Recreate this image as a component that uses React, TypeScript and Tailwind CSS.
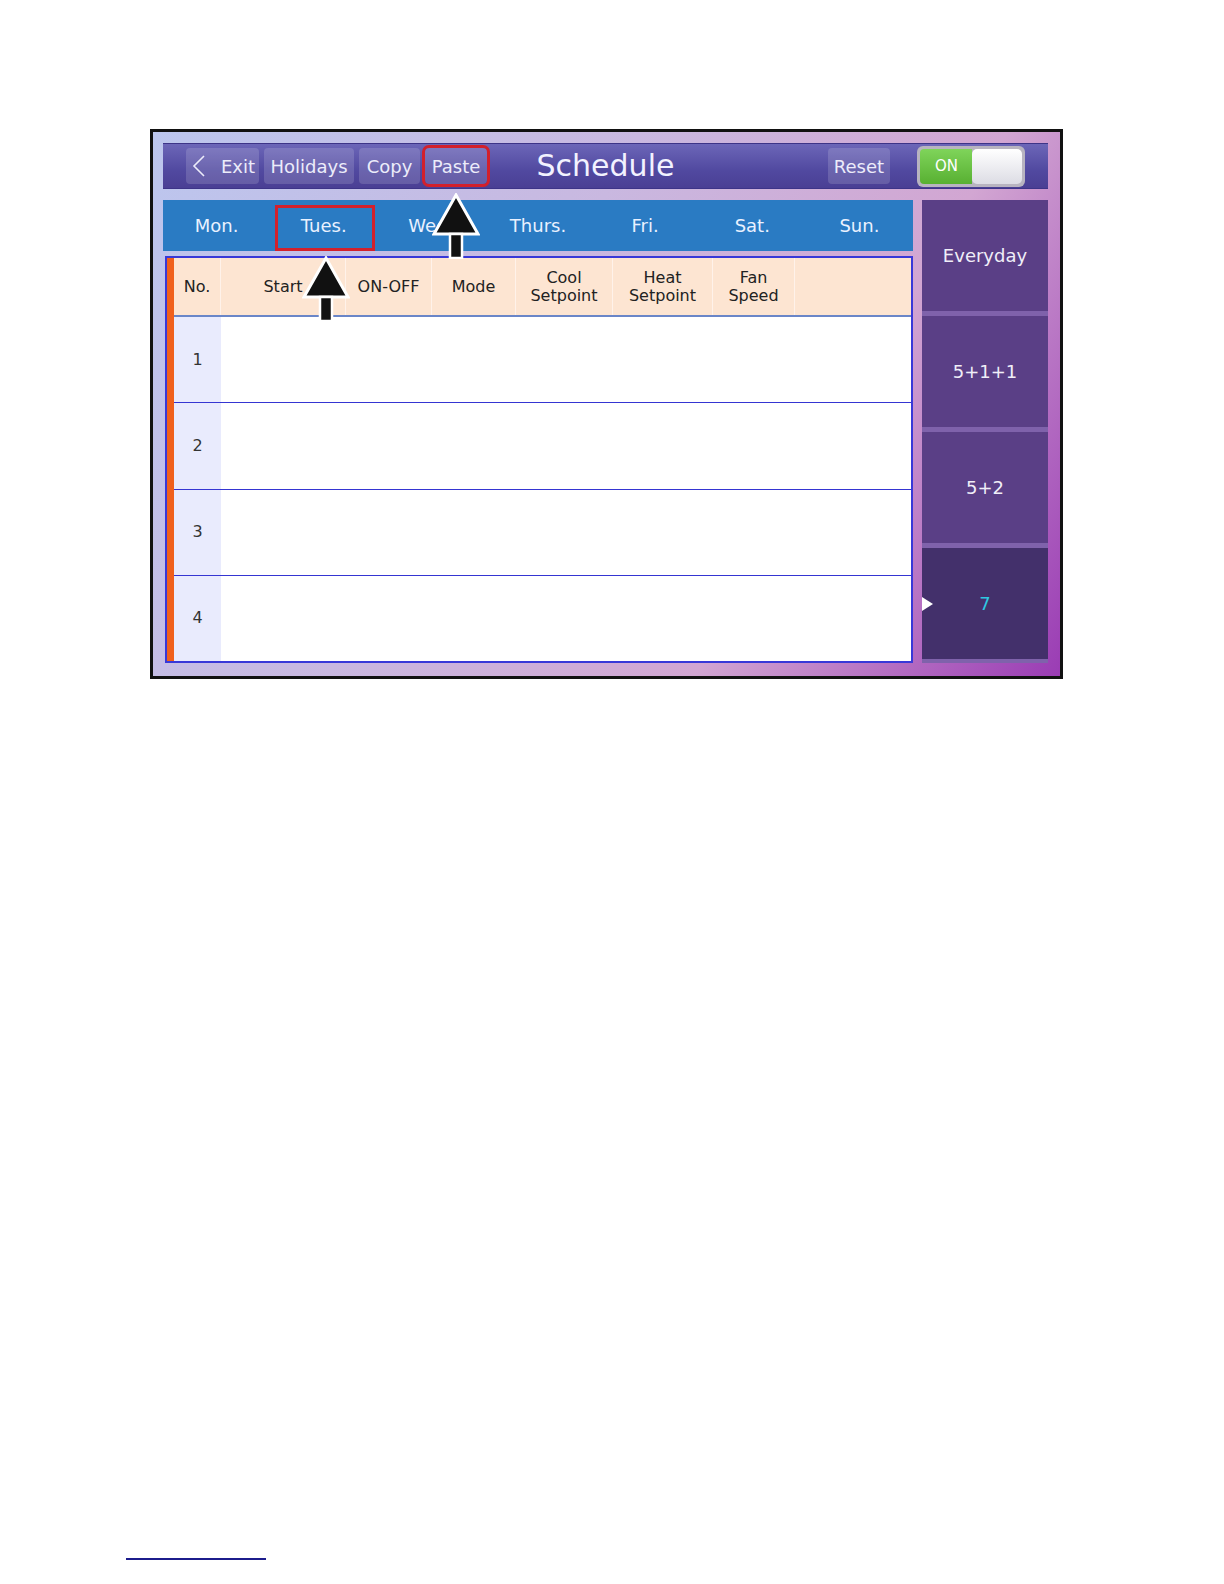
import React from 'react';

const days = ['Mon.', 'Tues.', 'Wed.', 'Thurs.', 'Fri.', 'Sat.', 'Sun.'];
const modes = ['Everyday', '5+1+1', '5+2', '7'];

function UpArrow({ className }: { className: string }) {
  return (
    <svg className={className} viewBox="0 0 48 66" width="48" height="66">
      <polygon points="24,2 46,41 2,41" fill="#111" stroke="#fff" strokeWidth="3" strokeLinejoin="miter" />
      <rect x="18" y="41" width="12" height="24" fill="#111" stroke="#fff" strokeWidth="2.5" />
    </svg>
  );
}

export default function App() {
  return (
    <div className="relative w-full bg-white pt-[129px] pl-[150px] pb-[20px] font-['DejaVu_Sans',sans-serif]">
      {/* Device frame */}
      <div className="relative w-[913px] h-[550px] border-[3px] border-[#111] bg-[linear-gradient(120deg,#bcc6ee_0%,#c9b8e0_40%,#d2a6d2_70%,#9a3cb4_100%)] pl-[10px] pt-[11px]">
        {/* Top bar */}
        <div className="w-[885px] h-[46px] grid grid-cols-[1fr_auto_1fr] items-center bg-[linear-gradient(to_bottom,#6c66b8,#5149a0_60%,#4a3f94)] border-y border-[#3d3488]">
          <div className="flex items-center gap-[5px] pl-[23px]">
            <div className="flex items-center h-[36px] w-[73px] rounded-[4px] bg-white/15 text-[18px] text-[#ececfa]">
              <svg width="22" height="26" viewBox="0 0 22 26" className="ml-[3px]">
                <polyline points="15,3 5,13 15,23" fill="none" stroke="#ececfa" strokeWidth="1.6" />
              </svg>
              <span className="ml-[10px]">Exit</span>
            </div>
            <div className="flex items-center justify-center h-[36px] w-[90px] rounded-[4px] bg-white/15 text-[18px] text-[#ececfa]">Holidays</div>
            <div className="flex items-center justify-center h-[36px] w-[61px] rounded-[4px] bg-white/15 text-[18px] text-[#ececfa]">Copy</div>
            <div className="flex items-center justify-center h-[36px] w-[62px] rounded-[4px] bg-white/15 text-[18px] text-[#ececfa] outline-[3px] outline-[#d2202c] outline-solid">Paste</div>
          </div>
          <div className="text-[30px] text-[#f2f2ff] leading-none px-[10px]">Schedule</div>
          <div className="flex items-center justify-end gap-[27px] pr-[23px]">
            <div className="flex items-center justify-center h-[36px] w-[62px] rounded-[4px] bg-white/15 text-[18px] text-[#ececfa]">Reset</div>
            <div className="flex h-[41px] w-[108px] rounded-[6px] bg-[#b8b4c0] p-[3px]">
              <div className="flex items-center pl-[15px] w-[52px] rounded-l-[4px] bg-[linear-gradient(to_bottom,#7fd45a,#58b032)] text-[15px] text-white">ON</div>
              <div className="flex-1 rounded-[5px] bg-[linear-gradient(to_bottom,#ffffff,#dcdce4)]" />
            </div>
          </div>
        </div>

        {/* Main area */}
        <div className="flex gap-[9px] mt-[11px]">
          <div className="w-[750px]">
            {/* Day tabs */}
            <div className="grid grid-cols-7 h-[51px] bg-[#2a7bc3] text-[18px] text-[#e9f1ff]">
              {days.map((d, i) => (
                <div key={d} className="flex items-center justify-center relative">
                  {i === 1 && <div className="absolute left-[5px] right-[2px] top-[5px] bottom-0 border-[3px] border-[#d2202c]" />}
                  <span>{d}</span>
                </div>
              ))}
            </div>

            {/* Schedule table */}
            <div className="mt-[5px] ml-[2px] w-[748px] h-[407px] border-2 border-[#3838d8] flex bg-white">
              <div className="w-[7px] bg-[#f0601c]" />
              <div className="flex-1 flex flex-col">
                <div className="flex h-[59px] bg-[#fde5d2] border-b-2 border-[#6a86c8] text-[16px] leading-[18px] text-[#222] text-center">
                  <div className="w-[47px] flex items-center justify-center border-r border-[#fff2ea]">No.</div>
                  <div className="w-[125px] flex items-center justify-center border-r border-[#fff2ea]">Start</div>
                  <div className="w-[86px] flex items-center justify-center border-r border-[#fff2ea]">ON-OFF</div>
                  <div className="w-[84px] flex items-center justify-center border-r border-[#fff2ea]">Mode</div>
                  <div className="w-[97px] flex items-center justify-center border-r border-[#fff2ea]">Cool<br />Setpoint</div>
                  <div className="w-[100px] flex items-center justify-center border-r border-[#fff2ea]">Heat<br />Setpoint</div>
                  <div className="w-[82px] flex items-center justify-center border-r border-[#fff2ea]">Fan<br />Speed</div>
                  <div className="flex-1" />
                </div>
                {[1, 2, 3, 4].map((n) => (
                  <div key={n} className={`flex flex-1 ${n > 1 ? 'border-t border-[#3535d2]' : ''}`}>
                    <div className="w-[47px] flex items-center justify-center bg-[#e9ebfd] text-[16px] text-[#333]">{n}</div>
                    <div className="flex-1 bg-white" />
                  </div>
                ))}
              </div>
            </div>
          </div>

          {/* Mode column */}
          <div className="w-[126px] flex flex-col gap-[5px] bg-[#7f62ab]">
            {modes.map((m, i) => (
              <div
                key={m}
                className={`relative flex items-center justify-center h-[111px] text-[18px] ${
                  i === 3 ? 'bg-[#43306b] text-[#2ec8e2]' : 'bg-[#5a3f86] text-[#f0eef8]'
                }`}
              >
                {i === 3 && (
                  <svg className="absolute left-0 top-[49px]" width="11" height="14" viewBox="0 0 11 14">
                    <polygon points="0,0 11,7 0,14" fill="#fff" />
                  </svg>
                )}
                {m}
              </div>
            ))}
          </div>
        </div>

        {/* Annotation arrows */}
        <UpArrow className="absolute left-[279px] top-[61px]" />
        <UpArrow className="absolute left-[149px] top-[124px]" />
      </div>

      {/* Footnote rule */}
      <div className="ml-[-24px] mt-[879px] w-[140px] h-[2px] bg-[#1c1c8c]" />
    </div>
  );
}
